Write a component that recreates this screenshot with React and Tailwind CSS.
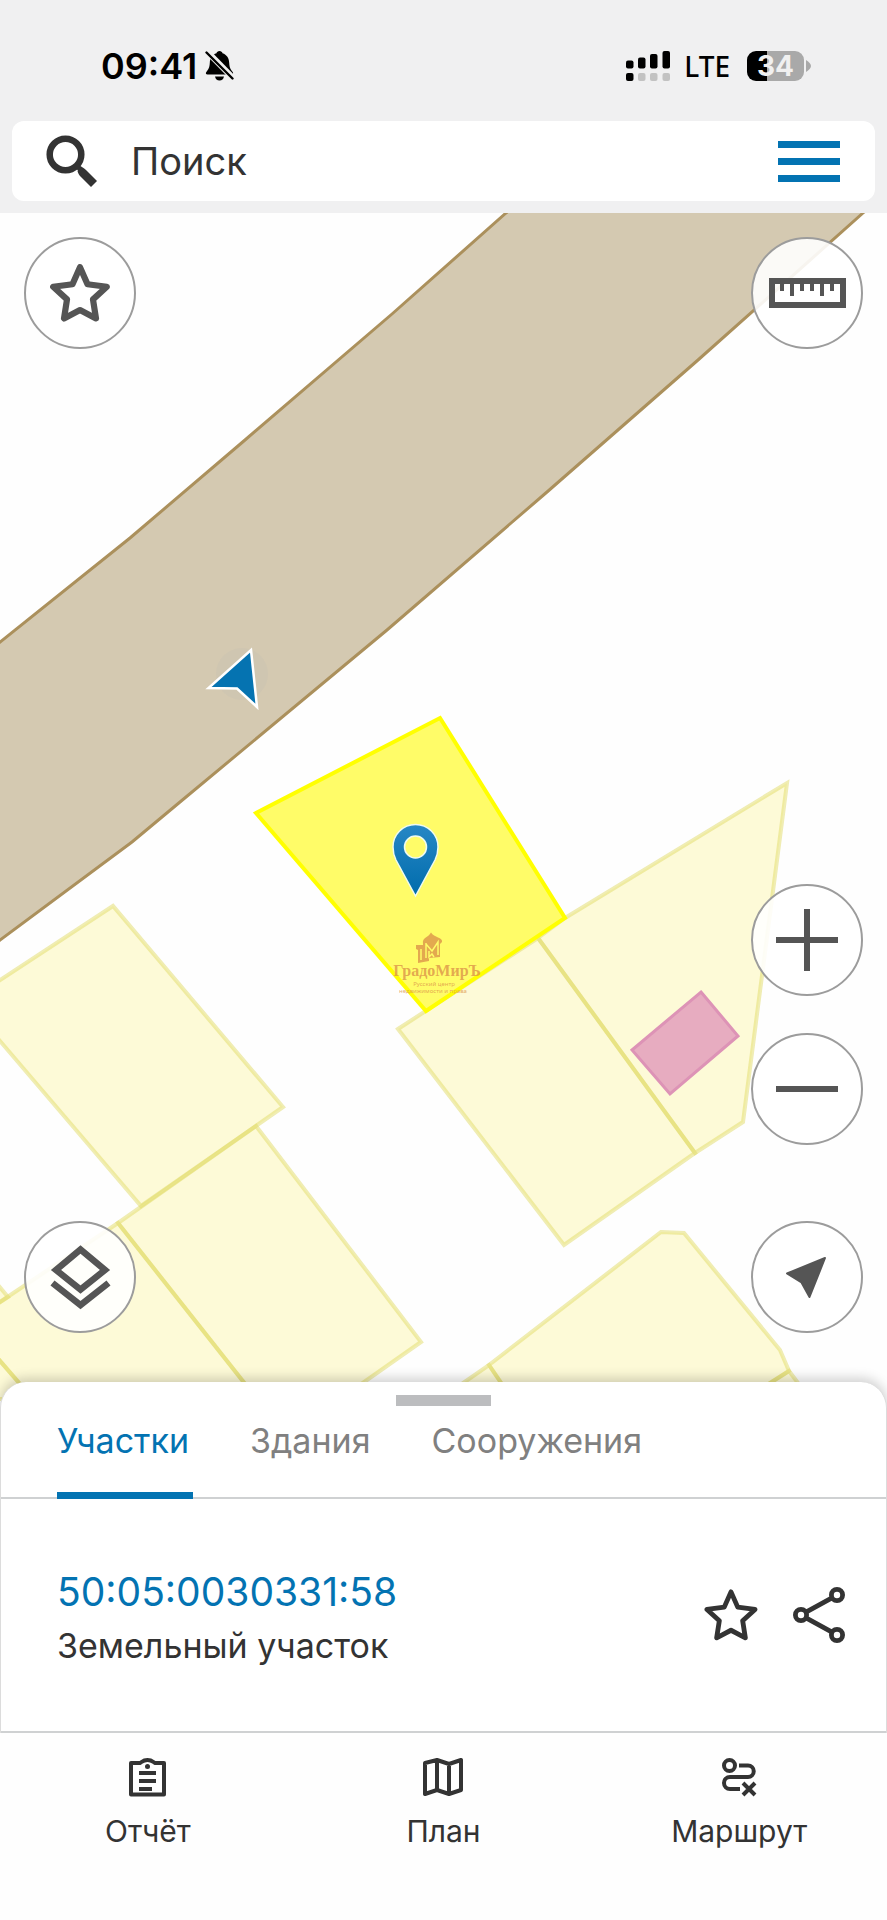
import { useState } from 'react';

const TABS = ['Участки', 'Здания', 'Сооружения'];

const PARCELS = [
  '-6,984 113,906 283,1107 141,1206 -6,1034',
  '256,1126 421,1342 340,1399 257,1399 118,1223',
  '118,1223 257,1399 33,1399 -6,1354 -6,1306',
  '-6,1354 33,1399 -6,1399',
  '-6,1280 8,1297 -6,1306',
  '398,1029 538,938 695,1153 564,1245',
  '565,918 787,783 743,1122 695,1153 538,938',
  '489,1365 661,1232 684,1233 780,1350 789,1371 745,1399 512,1399',
  '489,1365 512,1399 440,1399',
  '789,1371 810,1399 745,1399',
];

function StarIcon({ className, strokeWidth }) {
  return (
    <svg className={className} viewBox="0 0 60 58" fill="none" stroke="currentColor" strokeWidth={strokeWidth} strokeLinejoin="round">
      <path d="M30 3.2 L37.5 20.2 L56.8 22.8 L43 35.4 L46 54.4 L30 46 L14 54.4 L17 35.4 L3.2 22.8 L22.5 20.2 Z" />
    </svg>
  );
}

function StatusBar() {
  return (
    <div className="flex h-[121px] items-center justify-between pt-[10px] pr-[76px] pl-[101px] text-black">
      <div className="flex items-center gap-2">
        <span className="text-[36px] leading-10 font-semibold">09:41</span>
        <svg className="h-[31px] w-[29px]" viewBox="0 0 29 31" fill="currentColor">
          <path d="M14.5 1 c1.6 0 2.7 1 3 2.2 c4.300 1.300 6.500 5 6.700 9.500 c.2 5 1.500 6.800 3.300 9 c1.200 1.500 .6 2.800 -1 2.800 H2.500 c-1.600 0 -2.200 -1.300 -1 -2.800 c1.800 -2.200 3.100 -4 3.300 -9 c.2 -4.500 2.400 -8.200 6.700 -9.500 c.3 -1.200 1.400 -2.200 3 -2.200 Z" />
          <path d="M10 26.500 h9 c-.5 2.500 -2 4 -4.500 4 s-4 -1.500 -4.500 -4 Z" />
          <path d="M2 1.500 L28 28" stroke="#f0f0f0" strokeWidth="6" />
          <path d="M1.500 2.500 L27.500 28.500" stroke="currentColor" strokeWidth="2.400" strokeLinecap="round" />
        </svg>
      </div>
      <div className="flex items-center">
        <svg className="h-[30px] w-11" viewBox="0 0 44 30">
          <rect x="0" y="9.500" width="7.500" height="8" rx="2" />
          <rect x="12" y="6.500" width="7.500" height="11" rx="2" />
          <rect x="24" y="3" width="7.500" height="14.500" rx="2" />
          <rect x="36.500" y="0" width="7.500" height="17.500" rx="2" />
          <rect x="0" y="22" width="7.500" height="8" rx="2" />
          <g fill="#c2c2c2">
            <rect x="12" y="22" width="7.500" height="8" rx="2" />
            <rect x="24" y="22" width="7.500" height="8" rx="2" />
            <rect x="36.500" y="22" width="7.500" height="8" rx="2" />
          </g>
        </svg>
        <span className="ml-[14px] font-['Noto_Sans',sans-serif] text-[28px] leading-8 font-medium">LTE</span>
        <div className="ml-[17px] flex items-center gap-[2px]">
          <div className="flex h-[30px] w-[57px] items-center justify-center rounded-[9px] bg-[linear-gradient(90deg,#000_20px,#a9a9a9_20px)]">
            <span className="text-[28px] leading-[30px] font-bold text-[#f0f0f0]">34</span>
          </div>
          <svg className="h-3 w-[5px]" viewBox="0 0 5 12" fill="#a9a9a9">
            <path d="M0 0 C3 2 5 4 5 6 S3 10 0 12 Z" />
          </svg>
        </div>
      </div>
    </div>
  );
}

function SearchBar() {
  return (
    <form className="mx-3 mb-3 flex h-20 items-center rounded-xl bg-white pr-[35px] pl-[34px]">
      <label htmlFor="search" aria-label="Поиск" className="shrink-0 text-[#333]">
        <svg className="size-[52px]" viewBox="0 0 52 52" fill="none" stroke="currentColor">
          <circle cx="19.500" cy="19.500" r="15.800" strokeWidth="6.500" />
          <path d="M35 31.500 C38 33 40 35 42 37 L51 46 L45 52 L36 43 C34 41 32 39 31.500 36 Z" fill="currentColor" stroke="none" />
          <path d="M30 30 L36 36" strokeWidth="5" />
        </svg>
      </label>
      <input
        id="search"
        type="text"
        placeholder="Поиск"
        className="ml-[33px] min-w-0 flex-1 bg-transparent text-[38px] leading-[46px] outline-none placeholder:text-[#333]"
      />
      <button type="button" aria-label="Меню" className="flex w-[62px] shrink-0 flex-col gap-[10px]">
        <span className="h-[7px] bg-[#0373b2]" />
        <span className="h-[7px] bg-[#0373b2]" />
        <span className="h-[7px] bg-[#0373b2]" />
      </button>
    </form>
  );
}

function MapCanvas() {
  return (
    <svg className="absolute inset-x-0 top-0 h-[1200px] w-full" viewBox="0 213 887 1200" preserveAspectRatio="xMidYMin slice" fill="none">
      <defs>
        <linearGradient id="pin" x1="0" y1="0" x2="0" y2="1">
          <stop offset="0" stopColor="#2787c5" />
          <stop offset="1" stopColor="#006cac" />
        </linearGradient>
      </defs>

      {/* Road */}
      <path
        d="M524 198 L506 213 L392 314 L245 440 L130 538 L-6 647 L-6 945 L0 940 L132 842 L180 802 L387 630 L547 492 L698 360 L863 213 L880 198 Z"
        fill="#d4c9b1"
        stroke="#ab905c"
        strokeWidth="3"
      />

      {/* Land parcels */}
      <g fill="#fdfad7" stroke="none">
        {PARCELS.map((points) => <polygon key={points} points={points} />)}
      </g>
      <g stroke="#e2db68" strokeOpacity="0.5" strokeWidth="4">
        {PARCELS.map((points) => <polygon key={points} points={points} />)}
      </g>

      {/* Building */}
      <polygon points="701,992 738,1036 670,1094 632,1050" fill="#e7acc0" stroke="#dd93b6" strokeWidth="3" />

      {/* Selected parcel */}
      <polygon points="440,718 565,918 426,1011 256,813" fill="#fffc68" stroke="#ffff00" strokeWidth="4" />

      {/* Agency logo */}
      <g fill="#dc9448" fillOpacity="0.8">
        <path d="M423 944 C422 937 428 938 431 932.500 C434 938 443 937 442 942 L440 944 V957 L429 958 V961 L418 963 V950 L416 949 V945 H423 Z" />
        <path d="M421 949 V960 M426 943 V958 M426 944 L432 951 L438 942 V955 M429 951 V957 L432 954 L434 957" stroke="#fffc68" strokeWidth="1.500" fill="none" />
        <text x="437" y="976" textAnchor="middle" fontFamily="Liberation Serif, serif" fontWeight="700" fontSize="16">ГрадоМирЪ</text>
        <text x="434" y="986" textAnchor="middle" fontFamily="Noto Sans, sans-serif" fontSize="6">Русский центр</text>
        <text x="433" y="993" textAnchor="middle" fontFamily="Noto Sans, sans-serif" fontSize="6">недвижимости и права</text>
      </g>

      {/* Pin */}
      <path
        d="M415.500 896 L396 860 C394 856 393 852 393 847 A22.500 22.500 0 0 1 438 847 C438 852 437 856 435 860 Z M415.500 836 a11 11 0 1 0 0 22 a11 11 0 1 0 0 -22 Z"
        fill="url(#pin)"
        fillRule="evenodd"
        stroke="#eefaf0"
        strokeWidth="1.500"
      />

      {/* Current position */}
      <circle cx="242" cy="674" r="26" fill="#8aa0c0" fillOpacity="0.06" />
      <path d="M251 650 L257 707 L237 688.500 L208.500 688 Z" fill="#0573b1" stroke="#fff" strokeWidth="2.500" />
    </svg>
  );
}

function MapButton({ label, children }) {
  return (
    <button
      type="button"
      aria-label={label}
      className="flex size-[112px] items-center justify-center rounded-full border-2 border-[#9c9c9c] bg-white/90 text-[#555]"
    >
      {children}
    </button>
  );
}

function MapControls() {
  return (
    <div className="relative flex flex-1 justify-between px-6 pt-6 pb-[49px]">
      <div className="flex flex-col justify-between">
        <MapButton label="Избранное">
          <StarIcon className="h-[58px] w-[60px]" strokeWidth="6.2" />
        </MapButton>
        <MapButton label="Слои">
          <svg className="h-[65px] w-[61px]" viewBox="0 0 61 65" fill="none" stroke="currentColor" strokeWidth="6.500">
            <path d="M30.500 4.500 L55 25 L30.500 44.500 L6 25 Z" />
            <path d="M2.500 38 L30.500 60 L58.500 38" />
          </svg>
        </MapButton>
      </div>
      <div className="flex flex-col">
        <MapButton label="Линейка">
          <svg className="h-[30px] w-[77px]" viewBox="0 0 77 30" fill="none" stroke="currentColor">
            <rect x="3" y="3" width="71" height="24" strokeWidth="6" />
            <path d="M13 3 V13 M23 3 V18 M33 3 V13 M43 3 V13 M53 3 V18 M63 3 V13" strokeWidth="4" />
          </svg>
        </MapButton>
        <div className="mt-auto mb-[76px] flex flex-col gap-[37px]">
          <MapButton label="Приблизить">
            <svg className="size-[62px]" viewBox="0 0 62 62" stroke="currentColor" strokeWidth="6">
              <path d="M0 31 H62 M31 0 V62" />
            </svg>
          </MapButton>
          <MapButton label="Отдалить">
            <svg className="size-[62px]" viewBox="0 0 62 62" stroke="currentColor" strokeWidth="6">
              <path d="M0 31 H62" />
            </svg>
          </MapButton>
        </div>
        <MapButton label="Моё местоположение">
          <svg className="size-[42px]" viewBox="3 -1 42 42" fill="currentColor" stroke="currentColor" strokeWidth="2" strokeLinejoin="round">
            <path d="M42 1 L26.500 40 L18.500 25.500 L4 16.500 Z" />
          </svg>
        </MapButton>
      </div>
    </div>
  );
}

function ObjectSheet() {
  const [active, setActive] = useState(TABS[0]);

  return (
    <section className="relative rounded-t-[26px] border-x border-[#dcdcdc] bg-white shadow-[0_-4px_12px_rgba(0,0,0,0.18)]">
      <div className="flex justify-center pt-[13px]">
        <span className="h-[11px] w-[95px] bg-[#bcbdbf]" />
      </div>
      <div role="tablist" className="flex h-[93px] gap-[57px] border-b-2 border-[#cfd1d2] pl-[56px] text-[34px] leading-10">
        {TABS.map((tab) => (
          <button
            key={tab}
            type="button"
            role="tab"
            aria-selected={tab === active}
            onClick={() => setActive(tab)}
            className={`-mb-[2px] border-b-[7px] pr-1 pb-4 ${
              tab === active ? 'border-[#0373b2] text-[#0373b2]' : 'border-transparent text-[#808080]'
            }`}
          >
            {tab}
          </button>
        ))}
      </div>
      <div className="flex h-[234px] items-center justify-between border-b-2 border-[#cfd1d2] pr-[41px] pl-[56px]">
        <div className="pt-2">
          <a href="#parcel" className="block text-[39px] leading-[54px] text-[#0373b2]">50:05:0030331:58</a>
          <p className="text-[34px] leading-[54px] text-[#333]">Земельный участок</p>
        </div>
        <div className="flex items-center gap-[35px] text-[#333]">
          <button type="button" aria-label="В избранное">
            <StarIcon className="h-[52px] w-[54px]" strokeWidth="5.4" />
          </button>
          <button type="button" aria-label="Поделиться">
            <svg className="h-[56px] w-[52px]" viewBox="0 0 52 56" fill="none" stroke="currentColor" strokeWidth="4.800">
              <circle cx="44" cy="8" r="5.600" />
              <circle cx="8" cy="28" r="5.600" />
              <circle cx="44" cy="48" r="5.600" />
              <path d="M13 25.200 L39 10.800 M13 30.800 L39 45.200" />
            </svg>
          </button>
        </div>
      </div>
    </section>
  );
}

function BottomNav() {
  return (
    <nav className="relative grid h-[187px] grid-cols-3 bg-[#fefefe] pt-6 text-[30px] leading-9 text-[#333]">
      <button type="button" className="flex flex-col items-center gap-4 self-start">
        <svg className="size-[40px]" viewBox="0 0 40 40" fill="none" stroke="currentColor" strokeWidth="4">
          <path d="M3 6 H12 C14 5 15 3 19.500 3 S25 5 27 6 H36 V37.500 H3 Z" strokeLinejoin="round" />
          <path d="M11 16 H28 M11 24 H28 M11 32 H24" />
          <circle cx="19.500" cy="9.500" r="2.500" fill="currentColor" stroke="none" />
        </svg>
        Отчёт
      </button>
      <button type="button" className="flex flex-col items-center gap-4 self-start">
        <svg className="size-[40px]" viewBox="0 0 40 40" fill="none" stroke="currentColor" strokeWidth="4" strokeLinejoin="round">
          <path d="M2 6 L14 3 L26 7 L38 3 V33 L26 37 L14 33 L2 37 Z M14 3 V33 M26 7 V37" />
        </svg>
        План
      </button>
      <button type="button" className="flex flex-col items-center gap-4 self-start">
        <svg className="size-[40px]" viewBox="0 0 40 40" fill="none" stroke="currentColor" strokeWidth="4">
          <circle cx="10.500" cy="8.500" r="5.500" />
          <path d="M20 8.500 H29 A5.700 5.700 0 0 1 29 20 H11 A5.900 5.900 0 0 0 11 32 H21" />
          <path d="M24 26 L36 38 M36 26 L24 38" />
        </svg>
        Маршрут
      </button>
    </nav>
  );
}

export default function App() {
  return (
    <div className="flex min-h-screen flex-col overflow-hidden bg-[#fefefe] font-['Inter',sans-serif]">
      <header className="bg-[#f0f0f1]">
        <StatusBar />
        <SearchBar />
      </header>
      <main className="relative flex min-h-[900px] flex-1 flex-col">
        <MapCanvas />
        <MapControls />
      </main>
      <ObjectSheet />
      <BottomNav />
    </div>
  );
}
